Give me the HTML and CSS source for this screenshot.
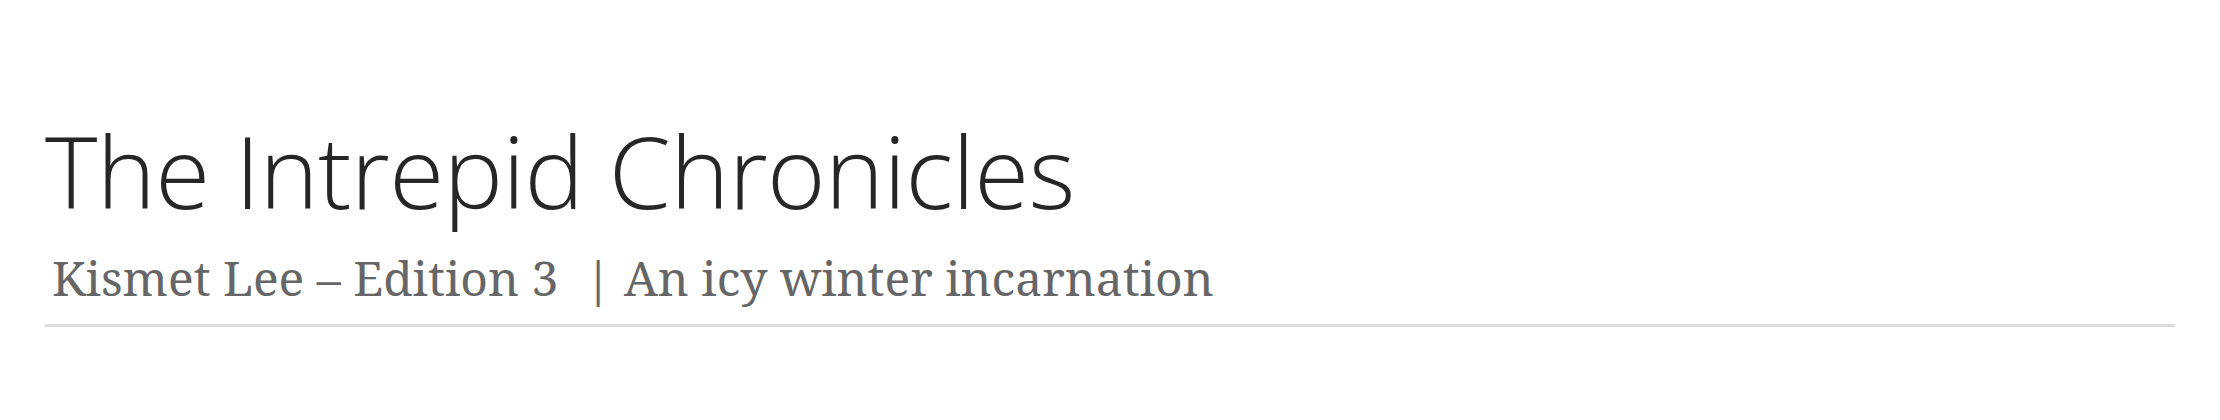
FILE: index.html
```html
<!DOCTYPE html>
<html lang="en">
<head>
<meta charset="utf-8">
<title>The Intrepid Chronicles</title>
<link rel="stylesheet" href="styles.css">
</head>
<body>
<header class="site-header">
  <h1 class="site-title">The Intrepid Chronicles</h1>
  <p class="site-subtitle">Kismet Lee – Edition 3 <span class="sep">|</span> An icy winter incarnation</p>
</header>
</body>
</html>
```
FILE: styles.css
```css
html, body {
  margin: 0;
  padding: 0;
  background: #ffffff;
}
.site-header {
  margin: 0 45px;
  padding-top: 115px;
  border-bottom: 3px solid #dcdcde;
  padding-bottom: 18px;
}
.site-title {
  margin: 0;
  font-family: "Open Sans", sans-serif;
  font-weight: 300;
  font-size: 100px;
  line-height: 110px;
  letter-spacing: -0.6px;
  color: #262626;
}
.site-subtitle {
  margin: 0;
  padding-top: 25px;
  padding-left: 7px;
  font-family: "Noto Serif", "DejaVu Serif Condensed", serif;
  font-size: 48px;
  line-height: 56px;
  color: #666666;
}
.sep {
  margin: 0 0 0 14px;
  color: #666666;
}
```
